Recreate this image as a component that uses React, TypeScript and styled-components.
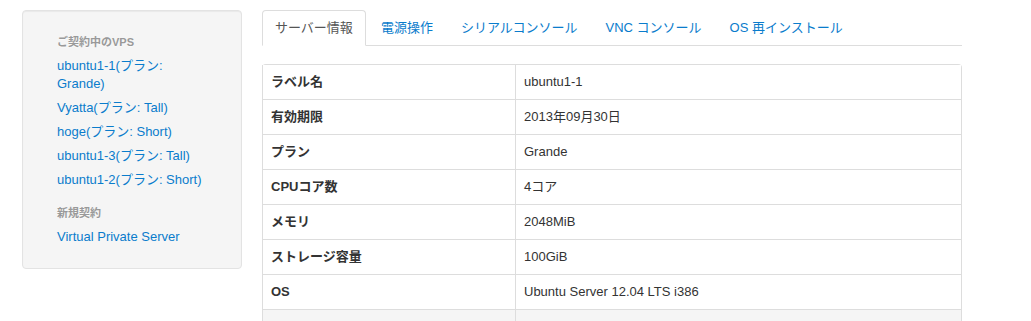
import styled, { createGlobalStyle } from 'styled-components';

const GlobalStyle = createGlobalStyle`
  html, body {
    margin: 0;
    padding: 0;
    background: #fff;
  }
  body {
    font-family: 'Liberation Sans', 'Noto Sans CJK JP', sans-serif;
    font-size: 13px;
    line-height: 18px;
    color: #333;
    overflow: hidden;
  }
`;

const Page = styled.div`
  display: flex;
  gap: 20px;
  padding: 10px 0 0 22px;
  width: 940px;
`;

const Sidebar = styled.div`
  width: 220px;
  flex-shrink: 0;
`;

const Well = styled.div`
  background: #f5f5f5;
  border: 1px solid #e3e3e3;
  border-radius: 4px;
  box-shadow: inset 0 1px 1px rgba(0, 0, 0, 0.05);
  padding: 19px;
`;

const NavList = styled.ul`
  list-style: none;
  margin: 0;
  padding: 0 14px 0 15px;
`;

const NavHeader = styled.li<{ $spaced?: boolean }>`
  font-size: 11px;
  font-weight: bold;
  line-height: 18px;
  color: #999;
  padding: 3px 0;
  margin-top: ${(p) => (p.$spaced ? '9px' : '0')};
  text-shadow: 0 1px 0 rgba(255, 255, 255, 0.5);
`;

const NavItem = styled.li`
  padding: 3px 0;
`;

const NavLink = styled.a`
  color: #0a7ccc;
  text-decoration: none;
  cursor: pointer;
`;

const Main = styled.div`
  width: 700px;
  flex-shrink: 0;
`;

const Tabs = styled.ul`
  display: flex;
  list-style: none;
  margin: 0 0 18px;
  padding: 0;
  border-bottom: 1px solid #ddd;
`;

const Tab = styled.li<{ $active?: boolean }>`
  margin-bottom: -1px;
  margin-right: 2px;
  padding: 8px 12px;
  line-height: 18px;
  border: 1px solid ${(p) => (p.$active ? '#ddd' : 'transparent')};
  border-bottom-color: transparent;
  border-radius: 4px 4px 0 0;
  background: ${(p) => (p.$active ? '#fff' : 'transparent')};
  color: ${(p) => (p.$active ? '#555' : '#0a7ccc')};
  cursor: pointer;
`;

const Table = styled.table`
  width: 100%;
  border-collapse: separate;
  border-spacing: 0;
  border: 1px solid #ddd;
  border-left: 0;
  border-radius: 4px;
`;

const Row = styled.tr<{ $shaded?: boolean }>`
  background: ${(p) => (p.$shaded ? '#f5f5f5' : '#fff')};
`;

const Cell = styled.td<{ $head?: boolean }>`
  padding: 8px;
  line-height: 18px;
  text-align: left;
  vertical-align: top;
  border-left: 1px solid #ddd;
  border-top: 1px solid #ddd;
  font-weight: ${(p) => (p.$head ? 'bold' : 'normal')};
  width: ${(p) => (p.$head ? '236px' : 'auto')};
  height: 18px;
  tr:first-child > & {
    border-top: 0;
  }
`;

const vpsList = [
  'ubuntu1-1(プラン: Grande)',
  'Vyatta(プラン: Tall)',
  'hoge(プラン: Short)',
  'ubuntu1-3(プラン: Tall)',
  'ubuntu1-2(プラン: Short)',
];

const tabs = ['サーバー情報', '電源操作', 'シリアルコンソール', 'VNC コンソール', 'OS 再インストール'];

const info: [string, string][] = [
  ['ラベル名', 'ubuntu1-1'],
  ['有効期限', '2013年09月30日'],
  ['プラン', 'Grande'],
  ['CPUコア数', '4コア'],
  ['メモリ', '2048MiB'],
  ['ストレージ容量', '100GiB'],
  ['OS', 'Ubuntu Server 12.04 LTS i386'],
];

const App = () => {
  return (
    <>
      <GlobalStyle />
      <Page>
        <Sidebar>
          <Well>
            <NavList>
              <NavHeader>ご契約中のVPS</NavHeader>
              {vpsList.map((name) => (
                <NavItem key={name}>
                  <NavLink>{name}</NavLink>
                </NavItem>
              ))}
              <NavHeader $spaced>新規契約</NavHeader>
              <NavItem>
                <NavLink>Virtual Private Server</NavLink>
              </NavItem>
            </NavList>
          </Well>
        </Sidebar>
        <Main>
          <Tabs>
            {tabs.map((t, i) => (
              <Tab key={t} $active={i === 0}>
                {t}
              </Tab>
            ))}
          </Tabs>
          <Table>
            <tbody>
              {info.map(([k, v]) => (
                <Row key={k}>
                  <Cell $head>{k}</Cell>
                  <Cell>{v}</Cell>
                </Row>
              ))}
              <Row $shaded>
                <Cell $head />
                <Cell />
              </Row>
            </tbody>
          </Table>
        </Main>
      </Page>
    </>
  );
};

export default App;
